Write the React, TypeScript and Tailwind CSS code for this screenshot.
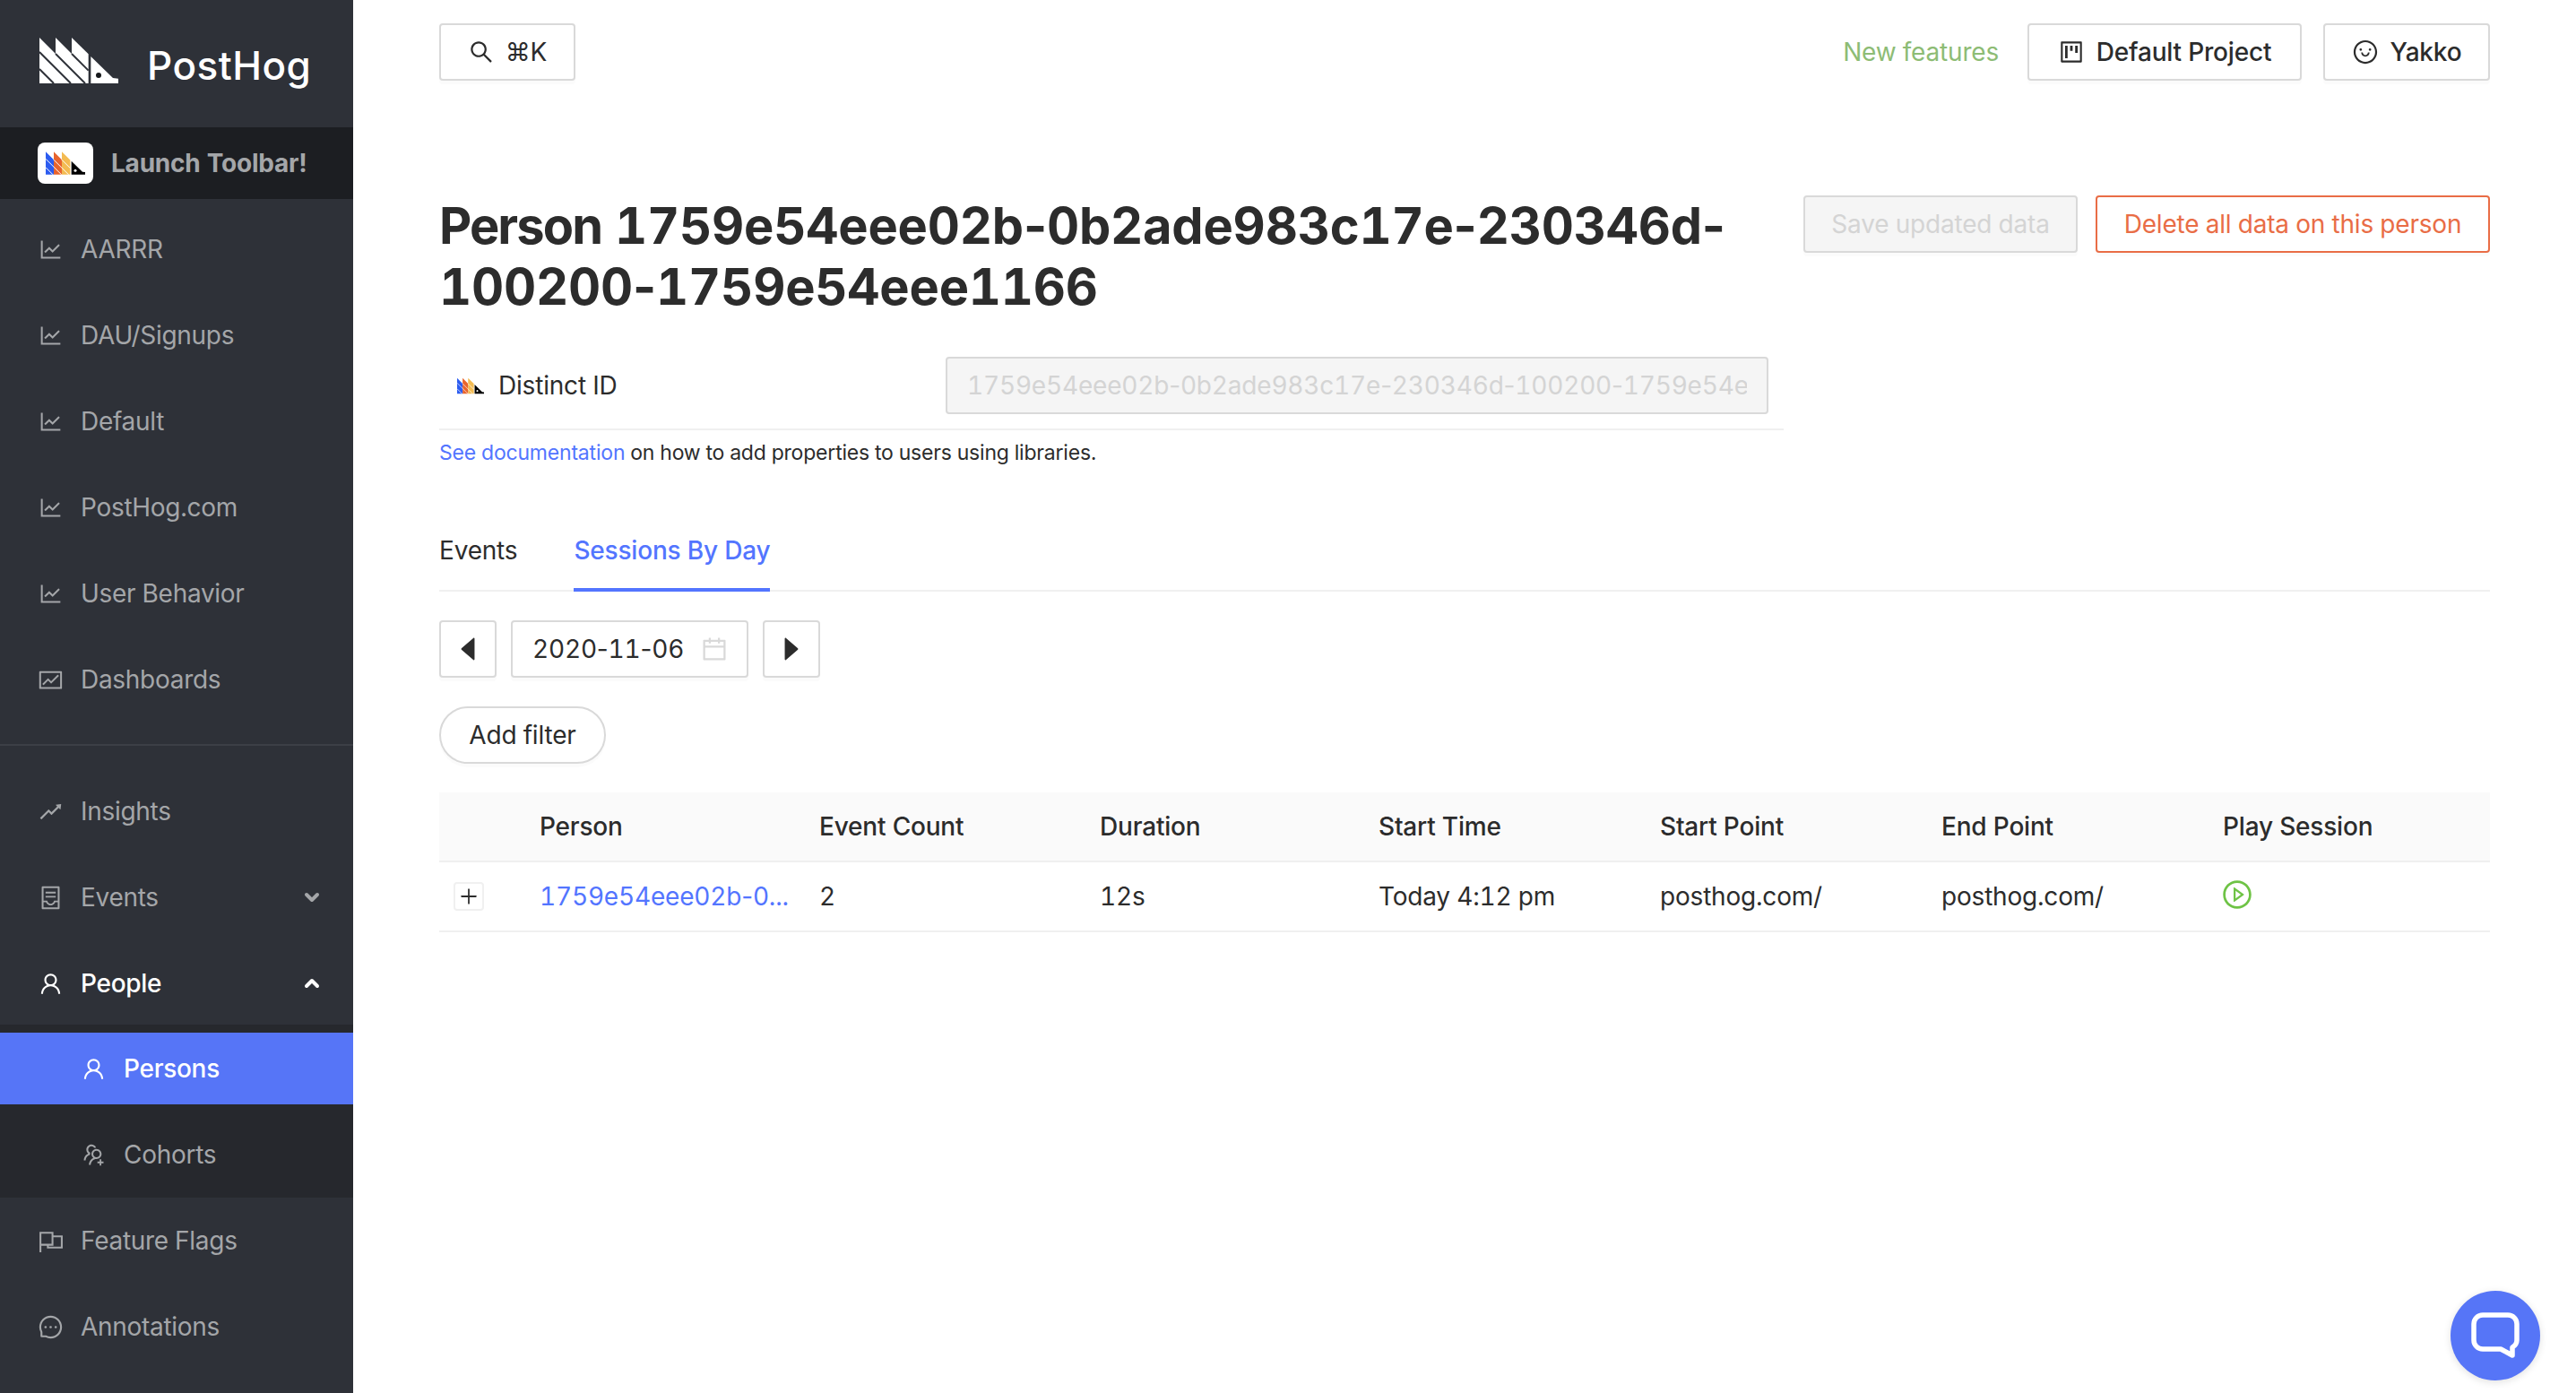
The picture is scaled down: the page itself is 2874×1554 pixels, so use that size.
import React from "react";
import { ChevronDown, ChevronUp } from "lucide-react";
import {
  AiOutlineLineChart,
  AiOutlineFund,
  AiOutlineRise,
  AiOutlineContainer,
  AiOutlineUser,
  AiOutlineUsergroupAdd,
  AiOutlineMessage,
  AiOutlineSearch,
  AiOutlineProject,
  AiOutlineSmile,
  AiOutlineCalendar,
  AiFillCaretLeft,
  AiFillCaretRight,
  AiOutlinePlus,
  AiOutlinePlayCircle,
} from "react-icons/ai";

function HogLogo({
  className,
  colors,
  gap,
  head,
  eye,
}: {
  className: string;
  colors: string[];
  gap: string;
  head: string;
  eye: string;
}) {
  return (
    <svg viewBox="72 55 264 153" className={className}>
      <polygon points="72,55 126,109 126,208 72,208" fill={colors[0]} />
      <polygon points="126,55 180,109 180,208 126,208" fill={colors[1]} />
      <polygon points="180,55 236,110 236,208 180,208" fill={colors[2]} />
      <g stroke={gap} strokeWidth="6">
        <line x1="72" y1="160" x2="120" y2="208" />
        <line x1="72" y1="103" x2="177" y2="208" />
        <line x1="126" y1="109" x2="225" y2="208" />
        <line x1="180" y1="109" x2="236" y2="165" />
      </g>
      <polygon points="244,118 318,190 336,192 336,208 244,208" fill={head} />
      <circle cx="270" cy="181" r="9" fill={eye} />
    </svg>
  );
}

function FlagsIcon({ className }: { className: string }) {
  return (
    <svg viewBox="0 0 28 28" fill="none" stroke="currentColor" strokeWidth="2" className={className}>
      <path d="M3 26V5h13v13H3" />
      <path d="M16 9h10v12H11v-3" />
    </svg>
  );
}

// digits are tabular here but the hyphens keep their own narrow width
function Hyphened({ text }: { text: string }) {
  return (
    <>
      {text.split("-").map((part, i) => (
        <React.Fragment key={i}>
          {i > 0 && <span className="[font-variant-numeric:normal]">-</span>}
          {part}
        </React.Fragment>
      ))}
    </>
  );
}

function MenuItem({
  icon,
  label,
  chevron,
}: {
  icon: React.ReactNode;
  label: string;
  chevron?: "up" | "down";
}) {
  return (
    <div className="h-20 mb-4 pl-[44px] pr-[34px] flex items-center text-[28px] text-[#a4a6a9]">
      <span className="w-[46px] shrink-0 flex items-center">{icon}</span>
      <span>{label}</span>
      {chevron === "down" && <ChevronDown className="ml-auto w-[24px] h-[24px]" strokeWidth={4} />}
      {chevron === "up" && <ChevronUp className="ml-auto w-[24px] h-[24px]" strokeWidth={4} />}
    </div>
  );
}

function Sidebar() {
  const ic = "w-[29px] h-[29px] ml-[-2px]";
  return (
    <div className="w-[394px] shrink-0 bg-[#2e3138] h-full overflow-hidden tracking-[-0.018em]">
      <div className="h-[142px] pl-[44px] flex items-center">
        <HogLogo
          className="w-[88px] h-[51px] mt-[-8px]"
          colors={["#fff", "#fff", "#fff"]}
          gap="#2e3138"
          head="#fff"
          eye="#16181b"
        />
        <span className="ml-[32px] mt-[4px] text-white text-[44px] font-medium tracking-[0.5px]">PostHog</span>
      </div>
      <div className="h-20 mb-4 bg-[#1c1e22] pl-[42px] flex items-center">
        <div className="w-[62px] h-[46px] bg-white rounded-lg flex items-center justify-center">
          <HogLogo
            className="w-[44px] h-[26px]"
            colors={["#2c5cf0", "#e8642d", "#f3bb52"]}
            gap="#fff"
            head="#000"
            eye="#fff"
          />
        </div>
        <span className="ml-5 text-[28px] font-bold text-[#a4a6a9] tracking-[-0.008em]">Launch Toolbar!</span>
      </div>
      <MenuItem icon={<AiOutlineLineChart className={ic} />} label="AARRR" />
      <MenuItem icon={<AiOutlineLineChart className={ic} />} label="DAU/Signups" />
      <MenuItem icon={<AiOutlineLineChart className={ic} />} label="Default" />
      <MenuItem icon={<AiOutlineLineChart className={ic} />} label="PostHog.com" />
      <MenuItem icon={<AiOutlineLineChart className={ic} />} label="User Behavior" />
      <MenuItem icon={<AiOutlineFund className={ic} />} label="Dashboards" />
      <div className="h-[2px] mt-8 mb-[33px] bg-[#3c3f46]" />
      <MenuItem icon={<AiOutlineRise className={ic} />} label="Insights" />
      <MenuItem icon={<AiOutlineContainer className={ic} />} label="Events" chevron="down" />
      <div className="h-20 pl-[44px] pr-[34px] flex items-center text-[28px] text-white font-medium">
        <span className="w-[46px] shrink-0 flex items-center">
          <AiOutlineUser className={ic} />
        </span>
        <span>People</span>
        <ChevronUp className="ml-auto w-[24px] h-[24px]" strokeWidth={4} />
      </div>
      <div className="mt-[6px] h-[193px] bg-[#26282d] pt-[9px]">
        <div className="h-20 bg-[#5675f7] pl-[92px] flex items-center text-[28px] text-white font-medium">
          <span className="w-[46px] shrink-0 flex items-center">
            <AiOutlineUser className={ic} />
          </span>
          <span>Persons</span>
        </div>
        <div className="h-20 mt-4 pl-[92px] flex items-center text-[28px] text-[#a4a6a9]">
          <span className="w-[46px] shrink-0 flex items-center">
            <AiOutlineUsergroupAdd className={ic} />
          </span>
          <span>Cohorts</span>
        </div>
      </div>
      <div className="h-2" />
      <MenuItem icon={<FlagsIcon className={ic} />} label="Feature Flags" />
      <MenuItem icon={<AiOutlineMessage className={ic} />} label="Annotations" />
    </div>
  );
}

function Btn({ children, className = "" }: { children: React.ReactNode; className?: string }) {
  return (
    <button
      className={`h-16 border-2 border-[#d9d9d9] rounded bg-white flex items-center justify-center text-[28px] text-[#2c2c2c] shadow-[0_4px_0_rgba(0,0,0,0.015)] ${className}`}
    >
      {children}
    </button>
  );
}

const tableCols = "grid-cols-[96px_312px_313px_311px_314px_314px_314px_1fr]";

export default function App() {
  const head = ["", "Person", "Event Count", "Duration", "Start Time", "Start Point", "End Point", "Play Session"];
  return (
    <div className="w-[2874px] h-[1554px] flex font-['Inter',sans-serif] tabular-nums tracking-[-0.012em] bg-white text-[#2c2c2c] overflow-hidden relative">
      <Sidebar />
      <div className="flex-1 px-24 pt-[26px]">
        <div className="flex items-center justify-between">
          <Btn className="w-[152px] gap-[12px]">
            <AiOutlineSearch className="w-[30px] h-[30px]" />
            <span>⌘K</span>
          </Btn>
          <div className="flex items-center">
            <span className="text-[28px] text-[#8dbc75] mr-8">New features</span>
            <Btn className="w-[306px] mr-6">
              <AiOutlineProject className="w-[30px] h-[30px] mr-[13px]" />
              <span className="font-medium">Default Project</span>
            </Btn>
            <Btn className="w-[186px]">
              <AiOutlineSmile className="w-[30px] h-[30px] mr-[13px]" />
              <span className="font-medium">Yakko</span>
            </Btn>
          </div>
        </div>

        <div className="mt-[128px] flex justify-between">
          <div className="w-[1500px]">
            <h1 className="text-[56px] leading-[68px] font-bold text-[#2c2c2c]">
              <span className="tracking-[-0.034em]">Person</span>{" "}
              <Hyphened text="1759e54eee02b-0b2ade983c17e-230346d-100200-1759e54eee1166" />
            </h1>
            <div className="mt-[44px] pb-4 pr-[17px] flex items-center border-b-2 border-[#f0f0f0]">
              <div className="w-[565px] pl-5 flex items-center">
                <HogLogo
                  className="w-[30px] h-[19px]"
                  colors={["#2c5cf0", "#e8642d", "#f3bb52"]}
                  gap="#fff"
                  head="#000"
                  eye="#fff"
                />
                <span className="ml-4 text-[28px]">Distinct ID</span>
              </div>
              <div className="w-[918px] h-16 border-2 border-[#d9d9d9] rounded bg-[#f5f5f5] pl-[22px] pr-[22px] flex items-center overflow-hidden">
                <span className="text-[28px] text-[#d4d4d4] whitespace-nowrap overflow-hidden">
                  <Hyphened text="1759e54eee02b-0b2ade983c17e-230346d-100200-1759e54eee1166" />
                </span>
              </div>
            </div>
            <p className="mt-[10px] text-[23px] leading-[30px]">
              <span className="text-[#5375ff]">See documentation</span> on how to add properties to users using
              libraries.
            </p>
          </div>
          <div className="flex gap-5">
            <Btn className="w-[306px] !bg-[#f5f5f5] !text-[#d4d4d4]">Save updated data</Btn>
            <Btn className="w-[440px] !border-[#e96d46] !text-[#e96d46]">Delete all data on this person</Btn>
          </div>
        </div>

        <div className="mt-[49px] h-[91px] flex border-b-2 border-[#f0f0f0] text-[28px]">
          <div className="pt-[24px] mr-[63px]">Events</div>
          <div className="pt-[24px] h-[91px] border-b-4 border-[#5375ff] text-[#5375ff] font-medium">Sessions By Day</div>
        </div>

        <div className="mt-8 flex gap-4">
          <Btn className="w-16">
            <AiFillCaretLeft className="w-9 h-9" />
          </Btn>
          <Btn className="w-[265px] !justify-start pl-[22px] pr-[20px]">
            <span>
              <Hyphened text="2020-11-06" />
            </span>
            <AiOutlineCalendar className="ml-auto w-[32px] h-[32px] text-[#d9d9d9]" />
          </Btn>
          <Btn className="w-16">
            <AiFillCaretRight className="w-9 h-9" />
          </Btn>
        </div>

        <Btn className="mt-8 w-[186px] !rounded-full">Add filter</Btn>

        <div className="mt-8 text-[28px]">
          <div className={`h-[78px] grid ${tableCols} items-center bg-[#fafafa] border-b-2 border-[#f0f0f0] font-medium`}>
            {head.map((h, i) => (
              <div key={i} className="pl-4">
                {h}
              </div>
            ))}
          </div>
          <div className={`h-[78px] grid ${tableCols} items-center border-b-2 border-[#f0f0f0]`}>
            <div className="pl-4">
              <div className="w-[34px] h-8 border-2 border-[#f0f0f0] rounded flex items-center justify-center">
                <AiOutlinePlus className="w-6 h-6" />
              </div>
            </div>
            <div className="pl-4 text-[#5375ff]">
              <Hyphened text="1759e54eee02b-0..." />
            </div>
            <div className="pl-4">2</div>
            <div className="pl-4">12s</div>
            <div className="pl-4">Today 4:12 pm</div>
            <div className="pl-4">posthog.com/</div>
            <div className="pl-4">posthog.com/</div>
            <div className="pl-4">
              <AiOutlinePlayCircle className="w-9 h-9 text-[#6ec345] ml-[-2px] mb-1" />
            </div>
          </div>
        </div>
      </div>

      <div className="absolute left-[2734px] top-[1440px] w-[100px] h-[100px] rounded-full bg-[#5675f7] flex items-center justify-center shadow-[0_2px_8px_rgba(0,0,0,0.12)]">
        <svg viewBox="0 0 56 56" className="w-[56px] h-[56px]" fill="none" stroke="#fff" strokeWidth="5.5" strokeLinejoin="round">
          <path d="M14 5h28a10 10 0 0 1 10 10v18q0 5-5 8v9l-13-7H14A10 10 0 0 1 4 33V15A10 10 0 0 1 14 5z" />
        </svg>
      </div>
    </div>
  );
}
